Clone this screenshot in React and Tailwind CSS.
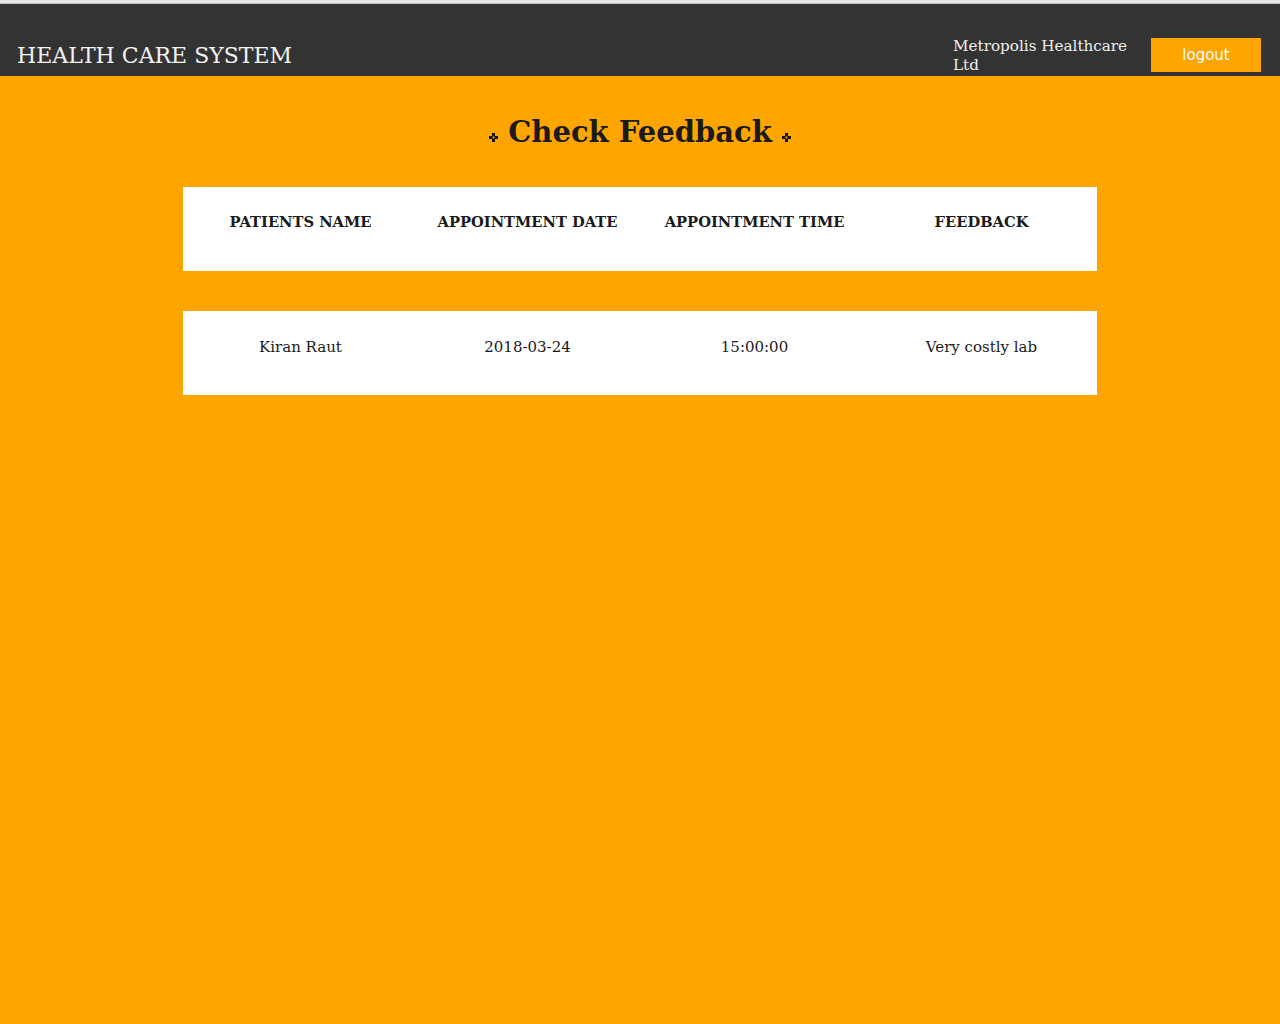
import React from "react";

function Deco() {
  return (
    <svg width="9" height="9" viewBox="0 0 9 9" className="inline-block">
      <path d="M3 0h3v3h3v3H6v3H3V6H0V3h3z" fill="#111" />
      <rect x="3.5" y="3.5" width="2" height="2" fill="#ffa500" />
    </svg>
  );
}

export default function App() {
  const cols = ["PATIENTS NAME", "APPOINTMENT DATE", "APPOINTMENT TIME", "FEEDBACK"];
  const row = ["Kiran Raut", "2018-03-24", "15:00:00", "Very costly lab"];
  return (
    <div className="min-h-[1024px] bg-[#ffa500] font-['DejaVu_Serif',serif] text-[#1a1a1a]">
      <div className="h-[4px] bg-[#e6e6e6] border-b border-[#c4c4c4]" />
      <header className="h-[72px] bg-[#333333] flex items-end justify-between">
        <h1 className="pl-[17px] pb-[6px] text-[22px] leading-[28px] text-[#f2f2f2]">HEALTH CARE SYSTEM</h1>
        <div className="flex items-end pr-[19px]">
          <div className="w-[190px] text-[15.2px] leading-[19px] text-[#f0f0f0] pb-[1px]">Metropolis Healthcare Ltd</div>
          <button className="ml-[8px] mb-[4px] w-[110px] h-[34px] bg-[#ffa500] text-white text-[15px] font-['DejaVu_Sans',sans-serif]">
            logout
          </button>
        </div>
      </header>
      <main className="pt-[38px]">
        <h2 className="flex items-center justify-center gap-[10px] text-[29px] leading-[36px] font-bold">
          <span className="mt-[10px] flex"><Deco /></span>
          <span>Check Feedback</span>
          <span className="mt-[10px] flex"><Deco /></span>
        </h2>
        <div className="w-[914px] mx-auto mt-[37px] flex flex-col gap-[40px]">
          <div className="grid grid-cols-4 h-[84px] bg-white pt-[25px] pl-[4px] pr-[2px]">
            {cols.map((c) => (
              <div key={c} className="text-center text-[14.7px] leading-[20px] font-bold">{c}</div>
            ))}
          </div>
          <div className="grid grid-cols-4 h-[84px] bg-white pt-[26px] pl-[4px] pr-[2px]">
            {row.map((c) => (
              <div key={c} className="text-center text-[15px] leading-[20px]">{c}</div>
            ))}
          </div>
        </div>
      </main>
    </div>
  );
}
